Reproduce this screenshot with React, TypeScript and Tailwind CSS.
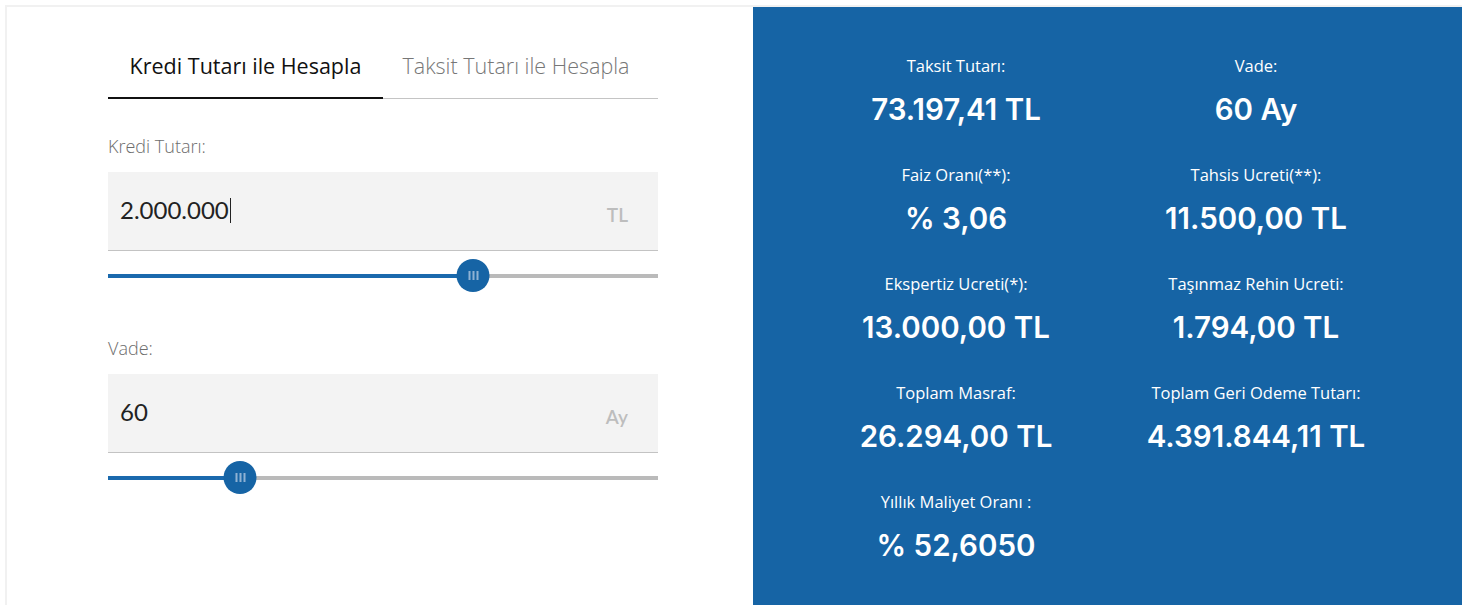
import React from 'react';

const RESULTS = [
  { label: 'Taksit Tutarı:', value: '73.197,41 TL' },
  { label: 'Vade:', value: '60 Ay' },
  { label: 'Faiz Oranı(**):', value: '% 3,06' },
  { label: 'Tahsis Ucreti(**):', value: '11.500,00 TL' },
  { label: 'Ekspertiz Ucreti(*):', value: '13.000,00 TL' },
  { label: 'Taşınmaz Rehin Ucreti:', value: '1.794,00 TL' },
  { label: 'Toplam Masraf:', value: '26.294,00 TL' },
  { label: 'Toplam Geri Odeme Tutarı:', value: '4.391.844,11 TL' },
  { label: 'Yıllık Maliyet Oranı :', value: '% 52,6050' },
];

function Field({
  label,
  value,
  unit,
  percent,
  caret,
}: {
  label: string;
  value: string;
  unit: string;
  percent: number;
  caret?: boolean;
}) {
  return (
    <div>
      <div className="font-['Open_Sans',sans-serif] text-[18px] font-light leading-5 text-[#6d6d6d]">
        {label}
      </div>
      <div className="mt-[16px] flex h-[79px] items-center justify-between border-b border-[#c3c3c3] bg-[#f3f3f3] pl-3 pr-[30px]">
        <span className="-mt-[2px] flex items-center text-[24px] leading-6 text-[#222]">
          {value}
          {caret && <span className="ml-[1px] inline-block h-[25px] w-px bg-[#222]" />}
        </span>
        <span className="mt-[8px] text-[19px] font-semibold text-[#bdbdbd]">{unit}</span>
      </div>
      <div className="relative mt-[8px] h-[34px]">
        <div className="absolute left-0 right-0 top-[15px] h-[4px] bg-[#bababa]" />
        <div
          className="absolute left-0 top-[15px] h-[4px] bg-[#1a69ad]"
          style={{ width: `${percent}%` }}
        />
        <div
          className="absolute top-0 flex h-[33px] w-[33px] -translate-x-1/2 items-center justify-center gap-[2px] rounded-full bg-[#1664a5]"
          style={{ left: `${percent}%` }}
        >
          <span className="h-[9px] w-[2px] bg-[#8fb2d4]" />
          <span className="h-[9px] w-[2px] bg-[#8fb2d4]" />
          <span className="h-[9px] w-[2px] bg-[#8fb2d4]" />
        </div>
      </div>
    </div>
  );
}

export default function App() {
  return (
    <div className="h-[605px] w-[1462px] overflow-hidden bg-white pl-[5px] pt-[5px] font-['Lato',sans-serif]">
      <div className="flex h-[620px] w-[1480px] border-l-2 border-t-2 border-[#f1f1f1]">
        <div className="w-[746px] shrink-0 bg-white pl-[101px] pt-[41px]">
          <div className="w-[550px]">
            <div className="flex border-b border-[#c4c4c4] font-['Open_Sans',sans-serif]">
              <div className="-mb-px flex h-[51px] w-1/2 items-start justify-center border-b-2 border-[#111] pt-[3px] text-[21.5px] leading-[30px] text-[#111]">
                Kredi Tutarı ile Hesapla
              </div>
              <div className="flex h-[50px] w-1/2 items-start justify-center pr-[9px] pt-[3px] text-[21.5px] font-light leading-[30px] text-[#777]">
                Taksit Tutarı ile Hesapla
              </div>
            </div>
            <div className="mt-[37px]">
              <Field label="Kredi Tutarı:" value="2.000.000" unit="TL" percent={66.4} caret />
            </div>
            <div className="mt-[45px]">
              <Field label="Vade:" value="60" unit="Ay" percent={24} />
            </div>
          </div>
        </div>
        <div className="flex-1 bg-[#1664a5] pl-[53px] pt-[49px] text-white">
          <div className="grid w-[600px] grid-cols-2 gap-y-[38px]">
            {RESULTS.map((r) => (
              <div className="flex flex-col items-center" key={r.label}>
                <div className="font-['Open_Sans',sans-serif] text-[16.5px] leading-5">{r.label}</div>
                <div className="mt-[15px] font-['Inter',sans-serif] text-[29.5px] font-semibold leading-9">
                  {r.value}
                </div>
              </div>
            ))}
          </div>
        </div>
      </div>
    </div>
  );
}
